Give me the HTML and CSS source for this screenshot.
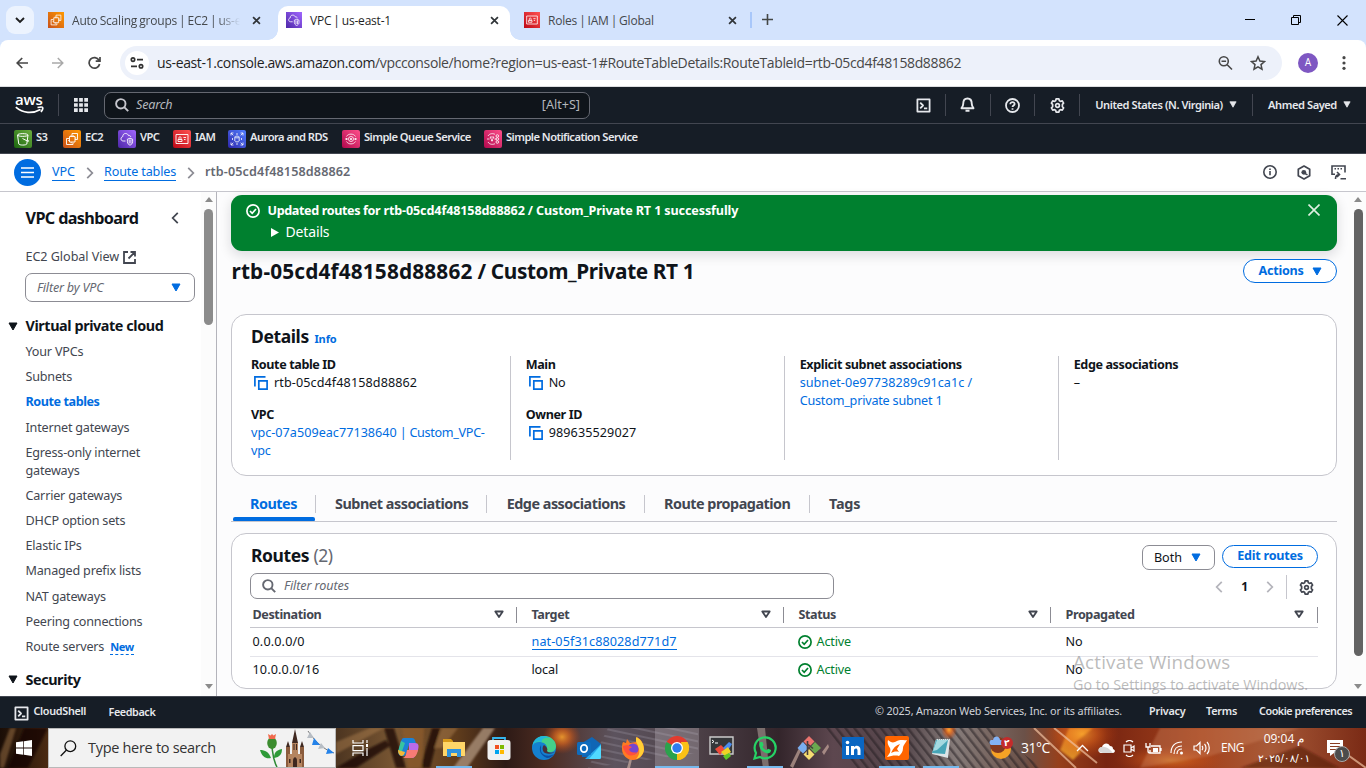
FILE: index.html
```html
<!DOCTYPE html>
<html lang="en">
<head>
<meta charset="utf-8">
<title>VPC | us-east-1</title>
<link rel="stylesheet" href="styles.css">
</head>
<body>
<svg class="defs" aria-hidden="true">
  <defs>
    <linearGradient id="g-orange" x1="0" y1="1" x2="1" y2="0"><stop offset="0" stop-color="#c8511b"/><stop offset="1" stop-color="#ff9900"/></linearGradient>
    <linearGradient id="g-purple" x1="0" y1="1" x2="1" y2="0"><stop offset="0" stop-color="#4d27a8"/><stop offset="1" stop-color="#a166ff"/></linearGradient>
    <linearGradient id="g-red" x1="0" y1="1" x2="1" y2="0"><stop offset="0" stop-color="#bd0816"/><stop offset="1" stop-color="#ff5252"/></linearGradient>
    <linearGradient id="g-green" x1="0" y1="1" x2="1" y2="0"><stop offset="0" stop-color="#1b660f"/><stop offset="1" stop-color="#6cae3e"/></linearGradient>
    <linearGradient id="g-blue" x1="0" y1="1" x2="1" y2="0"><stop offset="0" stop-color="#2e27ad"/><stop offset="1" stop-color="#527fff"/></linearGradient>
    <linearGradient id="g-pink" x1="0" y1="1" x2="1" y2="0"><stop offset="0" stop-color="#b0084d"/><stop offset="1" stop-color="#ff4f8b"/></linearGradient>
    <symbol id="i-ec2" viewBox="0 0 18 18"><path fill="url(#g-orange)" d="M0 0h18v18H0z"/><path fill="none" stroke="#fff" stroke-width=".9" d="M6 8.500H3.500v6H10V12.500M6.500 6.500h5.500v5.500H6.500zM9 6.500V3.500h5.500v6H12M8 5.200v1.300M10.200 5.200v1.300M5.200 10.500h1.300M12 8h1.300M8.200 12v1.300"/></symbol>
    <symbol id="i-vpc" viewBox="0 0 18 18"><path fill="url(#g-purple)" d="M0 0h18v18H0z"/><path fill="none" stroke="#fff" stroke-width=".9" d="M7.500 11H5.200C3.800 11 3 10 3 8.800c0-1.200.8-2 1.800-2.200C4.700 4.500 6 3.500 7.600 3.500c1.500 0 2.500.9 2.900 2.100 1.200-.3 2.100.3 2.400 1.400M12 8.200l2.600 1v2.600c0 1.600-1 2.700-2.600 3.400-1.600-.7-2.600-1.800-2.600-3.400V9.200zM11.200 9.500v4M12.900 9.500v4"/></symbol>
    <symbol id="i-iam" viewBox="0 0 18 18"><path fill="url(#g-red)" d="M0 0h18v18H0z"/><path fill="none" stroke="#fff" stroke-width=".9" d="M3 4.500h12v9H3zM5 11.500h4v-2H5zM6 9.500V7.500c0-1 2-1 2 0v2M10.500 7.500h2.500M11 9.500h1.500"/></symbol>
    <symbol id="i-s3" viewBox="0 0 18 18"><path fill="url(#g-green)" d="M0 0h18v18H0z"/><path fill="none" stroke="#fff" d="M3.500 5c0-1.800 10.500-1.800 10.500 0s-10.500 1.800-10.500 0zM3.500 5l1.300 9c.5 1.400 7.400 1.400 8 0L14 5M8.500 8.500l5 2.600c1.500.7 1.700-.3 0-1.300"/></symbol>
    <symbol id="i-rds" viewBox="0 0 18 18"><path fill="url(#g-blue)" d="M0 0h18v18H0z"/><path fill="none" stroke="#fff" stroke-width=".8" d="M3 5.500V3h2.500M3 3l2.300 2.300M12.500 3H15v2.500M15 3l-2.300 2.300M3 12.500V15h2.500M3 15l2.300-2.300M12.500 15H15v-2.500M15 15l-2.300-2.300M6.800 7c0-1.200 4.400-1.200 4.400 0v4c0 1.200-4.400 1.200-4.400 0zM6.800 7c0 1.200 4.400 1.200 4.400 0M4.500 8v2M13.500 8v2M8 14h2M8 4h2"/></symbol>
    <symbol id="i-sqs" viewBox="0 0 18 18"><path fill="url(#g-pink)" d="M0 0h18v18H0z"/><g fill="none" stroke="#fff" stroke-width=".8"><path d="M4.500 6.500C6.300 3.300 11.700 3.300 13.500 6.500M4.500 11.500c1.800 3.200 7.200 3.200 9 0M3 9h3M12 9h3M4.500 8v2M13.500 8v2"/><circle cx="9" cy="9" r="2.500"/><path d="M8 8l2 2M10 8l-2 2"/></g></symbol>
    <symbol id="i-sns" viewBox="0 0 18 18"><path fill="url(#g-pink)" d="M0 0h18v18H0z"/><g fill="none" stroke="#fff" stroke-width=".8"><path d="M4 6C5.500 3.300 9 3.300 11 4.300M4 12c1.500 2.700 5 2.700 7 1.700M3 9h2.500M6 7h4L8.500 9.500V11h-1V9.500zM10.500 9h2"/><circle cx="13.300" cy="6" r="1.300"/><circle cx="13.300" cy="9" r="1.300"/><circle cx="13.300" cy="12" r="1.300"/></g></symbol>
    <symbol id="i-x" viewBox="0 0 10 10"><path fill="none" stroke="currentColor" stroke-width="1.900" d="M1.200 1.200l7.600 7.600M8.800 1.200l-7.600 7.600"/></symbol>
    <symbol id="i-shell" viewBox="0 0 16 16"><path fill="none" stroke="currentColor" stroke-width="1.900" stroke-linejoin="round" d="M1.500 1.500h13v13h-13zM4.500 5l3 3-3 3M8.500 11h3.500"/></symbol>
    <symbol id="i-gear" viewBox="0 0 16 16"><path fill="none" stroke="currentColor" stroke-width="1.800" stroke-linejoin="round" d="M6 2.900L6.500 1h3l.5 1.900 1.200.7 1.900-.5 1.400 2.400-1.300 1.300v2.400l1.300 1.300-1.400 2.400-1.900-.5-1.200.7L9.500 15h-3L6 13.100l-1.200-.7-1.900.5-1.400-2.400 1.300-1.300V6.800L1.500 5.500l1.400-2.400 1.900.5z"/><circle cx="8" cy="8" r="2" fill="none" stroke="currentColor" stroke-width="1.800"/></symbol>
    <symbol id="i-down" viewBox="0 0 10 9"><path fill="currentColor" stroke="currentColor" stroke-linejoin="round" d="M1 1h8L5 8z"/></symbol>
    <symbol id="i-sort" viewBox="0 0 10 9"><path fill="none" stroke="currentColor" stroke-width="1.800" stroke-linejoin="round" d="M1.300 1.500h7.400L5 7z"/></symbol>
    <symbol id="i-right" viewBox="0 0 8 13"><path fill="none" stroke="currentColor" stroke-width="1.900" d="M1 1l5.500 5.500L1 12"/></symbol>
    <symbol id="i-left" viewBox="0 0 8 13"><path fill="none" stroke="currentColor" stroke-width="1.900" d="M7 1L1.500 6.500 7 12"/></symbol>
    <symbol id="i-search" viewBox="0 0 14 14"><g fill="none" stroke="currentColor" stroke-width="1.900"><circle cx="5.800" cy="5.800" r="4.700"/><path d="M9.200 9.200l4 4"/></g></symbol>
    <symbol id="i-copy" viewBox="0 0 14 14"><path fill="none" stroke="currentColor" stroke-width="1.700" d="M4.800 4.800h8.300v8.300H4.800zM.9 10.500V.9h10.600"/></symbol>
    <symbol id="i-ok" viewBox="0 0 14 14"><g fill="none" stroke="currentColor" stroke-width="1.700"><circle cx="7" cy="7" r="6.100"/><path d="M4 7l2.200 2.300L10 5"/></g></symbol>
  </defs>
</svg>

<div class="tabstrip">
  <div class="tab-search"><svg width="10" height="7" viewBox="0 0 10 7"><path fill="none" stroke="#1f1f1f" stroke-width="1.900" d="M1 1l4 4 4-4"/></svg></div>
  <div class="tab tab-first"><svg width="16" height="16"><use href="#i-ec2"/></svg><span class="tab-title faded">Auto Scaling groups | EC2 | us-e</span><svg class="tab-x" width="9" height="9"><use href="#i-x"/></svg></div>
  <div class="tab tab-active"><svg width="16" height="16"><use href="#i-vpc"/></svg><span class="tab-title">VPC | us-east-1</span><svg class="tab-x" width="9" height="9"><use href="#i-x"/></svg></div>
  <div class="tab tab-last"><svg width="16" height="16"><use href="#i-iam"/></svg><span class="tab-title">Roles | IAM | Global</span><svg class="tab-x" width="9" height="9"><use href="#i-x"/></svg></div>
  <div class="tab-new"><svg width="11" height="11" viewBox="0 0 11 11"><path stroke="#444746" stroke-width="1.600" d="M5.500 0v11M0 5.500h11"/></svg></div>
  <div class="win-controls">
    <svg width="10" height="10" viewBox="0 0 10 10"><path stroke="#000" d="M0 4.500h10"/></svg>
    <svg width="10" height="10" viewBox="0 0 10 10"><path fill="none" stroke="#000" d="M.5 2.500h7v7h-7zM2.500 2.500v-2h7v7h-2"/></svg>
    <svg width="11" height="11" viewBox="0 0 11 11"><path stroke="#000" stroke-width="1.100" d="M.5.500l10 10M10.500.500l-10 10"/></svg>
  </div>
</div>

<div class="toolbar">
  <svg class="nav-btn" width="12" height="12" viewBox="0 0 12 12"><path fill="none" stroke="#474747" stroke-width="1.700" d="M12 6H1.200M6.200 1L1.200 6l5 5"/></svg>
  <svg class="nav-btn" width="12" height="12" viewBox="0 0 12 12"><path fill="none" stroke="#a9a9a9" stroke-width="1.500" d="M0 6h10.800M5.800 1l5 5-5 5"/></svg>
  <svg class="nav-btn" width="14" height="14" viewBox="0 0 14 14"><path fill="none" stroke="#474747" stroke-width="1.700" d="M11 4.200A5.300 5.300 0 1 0 11.600 8M12 1v4.200H7.700"/></svg>
  <div class="omnibox">
    <div class="site-info"><svg width="14" height="12" viewBox="0 0 14 12"><g fill="none" stroke="#303030" stroke-width="1.700"><circle cx="3" cy="2.600" r="1.700"/><path d="M7 2.600h6M1 9.300h6"/><circle cx="11" cy="9.300" r="1.700"/></g></svg></div>
    <span class="url"><b>us-east-1.console.aws.amazon.com</b>/vpcconsole/home?region=us-east-1#RouteTableDetails:RouteTableId=rtb-05cd4f48158d88862</span>
    <svg class="zoom-icon" width="15" height="15" viewBox="0 0 15 15"><g fill="none" stroke="#474747" stroke-width="1.600"><circle cx="5.800" cy="5.300" r="4.500"/><path d="M3.500 5.300h4.600M9.200 8.700l4.800 4.800"/></g></svg>
    <svg class="star" width="16" height="16" viewBox="0 0 16 16"><path fill="none" stroke="#474747" stroke-width="1.500" d="M8 1.800l1.900 4.300 4.600.4-3.500 3.100 1 4.600L8 11.800l-4 2.400 1-4.600L1.500 6.500l4.600-.4z"/></svg>
  </div>
  <div class="avatar">A</div>
  <svg class="kebab" width="4" height="14" viewBox="0 0 4 14"><g fill="#474747"><circle cx="2" cy="1.700" r="1.600"/><circle cx="2" cy="7" r="1.600"/><circle cx="2" cy="12.300" r="1.600"/></g></svg>
</div>

<header class="aws-bar">
  <div class="logo"><span>aws</span><svg width="29" height="9" viewBox="0 0 29 9"><path fill="none" stroke="#fff" stroke-width="1.700" d="M.8 1.200C8 7.500 17.500 8 25.500 3.500M22.500 1.500c3-.7 5-.5 5.200.1.300.8-.4 2.800-1.700 4.400"/></svg></div>
  <div class="apps"><svg width="14" height="14" viewBox="0 0 15 15"><path fill="#e6e8ec" d="M0 0h4v4H0zM5.500 0h4v4h-4zM11 0h4v4h-4zM0 5.500h4v4H0zM5.500 5.500h4v4h-4zM11 5.500h4v4h-4zM0 11h4v4H0zM5.500 11h4v4h-4zM11 11h4v4h-4z"/></svg></div>
  <div class="aws-search"><svg width="14" height="14"><use href="#i-search"/></svg><i>Search</i><span>[Alt+S]</span></div>
  <div class="aws-tools">
    <div class="tool"><svg width="15" height="15"><use href="#i-shell"/></svg></div>
    <div class="tool"><svg width="15" height="16" viewBox="0 0 15 16"><path fill="none" stroke="currentColor" stroke-width="1.900" stroke-linejoin="round" d="M3.200 7C3.200 3.500 4.500 1.500 7.500 1.500S11.800 3.500 11.800 7c0 2 .7 3 1.700 4.200h-12C2.500 10 3.200 9 3.200 7zM5.500 13.700h4"/></svg></div>
    <div class="tool"><svg width="15" height="15" viewBox="0 0 15 15"><g fill="none" stroke="currentColor" stroke-width="1.800"><circle cx="7.500" cy="7.500" r="6.500"/><path d="M5.300 6.200c0-2.800 4.500-2.600 4.300-.1-.1 1.500-2.100 1.400-2.100 3M7.500 10.300v1.500"/></g></svg></div>
    <div class="tool"><svg width="15" height="15"><use href="#i-gear"/></svg></div>
    <div class="tool region"><span>United States (N. Virginia)</span><svg width="8" height="7"><use href="#i-down"/></svg></div>
    <div class="tool user"><span>Ahmed Sayed</span><svg width="8" height="7"><use href="#i-down"/></svg></div>
  </div>
</header>

<nav class="favorites">
  <a class="w49"><svg><use href="#i-s3"/></svg><span>S3</span></a>
  <a class="w55"><svg><use href="#i-ec2"/></svg><span>EC2</span></a>
  <a class="w55"><svg><use href="#i-vpc"/></svg><span>VPC</span></a>
  <a class="w55"><svg><use href="#i-iam"/></svg><span>IAM</span></a>
  <a class="w114"><svg><use href="#i-rds"/></svg><span>Aurora and RDS</span></a>
  <a class="w142"><svg><use href="#i-sqs"/></svg><span>Simple Queue Service</span></a>
  <a><svg><use href="#i-sns"/></svg><span>Simple Notification Service</span></a>
</nav>

<div class="crumbs">
  <div class="menu-btn"><svg width="13" height="11" viewBox="0 0 13 11"><path stroke="#fff" stroke-width="1.500" d="M0 1h13M0 5.500h13M0 10h13"/></svg></div>
  <a class="c1">VPC</a><svg class="sep" width="8" height="12"><use href="#i-right"/></svg>
  <a class="c2">Route tables</a><svg class="sep" width="8" height="12"><use href="#i-right"/></svg>
  <b>rtb-05cd4f48158d88862</b>
  <div class="crumb-tools">
    <svg width="14" height="14" viewBox="0 0 14 14"><g fill="none" stroke="currentColor" stroke-width="1.600"><circle cx="7" cy="7" r="6.200"/><path d="M7 6v4.300M7 3.500v1.600"/></g></svg>
    <svg width="14" height="15" viewBox="0 0 14 15"><path fill="none" stroke="currentColor" stroke-width="1.700" stroke-linejoin="round" d="M7 1l5.700 3.200v6.600L7 14l-5.700-3.200V4.200z"/><circle cx="6.800" cy="7.300" r="2.400" fill="currentColor"/><path stroke="currentColor" stroke-width="1.500" d="M7 8l3.500 1.800"/></svg>
    <svg width="15" height="15" viewBox="0 0 15 15"><path fill="none" stroke="currentColor" stroke-width="1.600" d="M4 9.200H1V1h13v6.500M3.500 3.800h1.500M6.500 3.800H8M9.500 3.800H11M4.500 14c0-3 1-4.300 3.500-4.500M6 7l2.500 2.500L6 12M9.500 13.700H15"/></svg>
  </div>
</div>

<div class="workspace">
  <aside class="sidebar">
    <div class="side-head"><h2>VPC dashboard</h2><svg width="8" height="12"><use href="#i-left"/></svg></div>
    <a class="global">EC2 Global View <svg width="13" height="13" viewBox="0 0 13 13"><path fill="none" stroke="currentColor" stroke-width="1.800" d="M5 1H1v11h11V8M7.500 1H12v4.500M12 1L5.500 7.500"/></svg></a>
    <div class="select"><i>Filter by VPC</i><svg width="10" height="9"><use href="#i-down"/></svg></div>
    <h3><svg width="10" height="9"><use href="#i-down"/></svg>Virtual private cloud</h3>
    <ul>
      <li>Your VPCs</li><li>Subnets</li><li class="on">Route tables</li><li>Internet gateways</li><li>Egress-only internet<br>gateways</li><li>Carrier gateways</li><li>DHCP option sets</li><li>Elastic IPs</li><li>Managed prefix lists</li><li>NAT gateways</li><li>Peering connections</li><li>Route servers <span class="new">New</span></li>
    </ul>
    <h3 class="h3-2"><svg width="10" height="9"><use href="#i-down"/></svg>Security</h3>
  </aside>
  <div class="scrollbar"><i class="up"></i><div class="thumb short"></div><i class="dn"></i></div>

  <main class="main">
    <div class="flash">
      <svg width="14" height="14"><use href="#i-ok"/></svg>
      <div class="flash-body"><b><span>Updated routes for</span> rtb-05cd4f48158d88862 / Custom_Private RT 1 successfully</b><p><svg width="8" height="9" viewBox="0 0 8 9"><path fill="#fff" d="M0 0l8 4.500L0 9z"/></svg>Details</p></div>
      <svg class="flash-x" width="12" height="12" viewBox="0 0 12 12"><path stroke="#dff0e2" stroke-width="1.600" d="M.5.500l11 11M11.500.500l-11 11"/></svg>
    </div>
    <div class="title-row"><h1><span>rtb-05cd4f48158d88862</span> / Custom_Private RT 1</h1><div class="pill actions">Actions<svg width="10" height="9"><use href="#i-down"/></svg></div></div>

    <section class="card details">
      <h2>Details <small>Info</small></h2>
      <div class="cols">
        <dl><dt>Route table ID</dt><dd class="id"><svg class="copy"><use href="#i-copy"/></svg>rtb-05cd4f48158d88862</dd><dt>VPC</dt><dd class="lnk"><span class="id">vpc-07a509eac77138640</span><span class="tight"> | Custom_VPC-</span><br>vpc</dd></dl>
        <dl><dt>Main</dt><dd><svg class="copy"><use href="#i-copy"/></svg>No</dd><dt>Owner ID</dt><dd class="id"><svg class="copy"><use href="#i-copy"/></svg>989635529027</dd></dl>
        <dl><dt>Explicit subnet associations</dt><dd class="lnk"><span class="id">subnet-0e97738289c91ca1c /</span><br>Custom_private subnet 1</dd></dl>
        <dl><dt>Edge associations</dt><dd>–</dd></dl>
      </div>
    </section>

    <div class="tabs">
      <span class="t1 sel">Routes</span><span class="t2">Subnet associations</span><span class="t3">Edge associations</span><span class="t4">Route propagation</span><span class="t5">Tags</span>
    </div>

    <section class="card routes">
      <div class="routes-head"><h2>Routes <em>(2)</em></h2><div class="both">Both<svg width="10" height="9"><use href="#i-down"/></svg></div><div class="pill edit">Edit routes</div></div>
      <div class="filter-row">
        <div class="filter"><svg width="14" height="14"><use href="#i-search"/></svg><i>Filter routes</i></div>
        <div class="pager"><svg width="8" height="12"><use href="#i-left"/></svg><b>1</b><svg width="8" height="12"><use href="#i-right"/></svg></div>
        <div class="prefs"><svg width="15" height="15"><use href="#i-gear"/></svg></div>
      </div>
      <div class="row thead"><div>Destination<svg><use href="#i-sort"/></svg></div><div>Target<svg><use href="#i-sort"/></svg></div><div>Status<svg><use href="#i-sort"/></svg></div><div>Propagated<svg><use href="#i-sort"/></svg></div></div>
      <div class="row line"><div class="id">0.0.0.0/0</div><div><a class="nat id">nat-05f31c88028d771d7</a></div><div class="ok"><svg><use href="#i-ok"/></svg>Active</div><div>No</div></div>
      <div class="row"><div class="id">10.0.0.0/16</div><div>local</div><div class="ok"><svg><use href="#i-ok"/></svg>Active</div><div>No</div></div>
    </section>
  </main>
  <div class="scrollbar dark"><i class="up"></i><div class="thumb long"></div><i class="dn"></i></div>
</div>

<footer class="aws-foot">
  <svg width="15" height="15"><use href="#i-shell"/></svg><span class="f1">CloudShell</span><span class="f2">Feedback</span>
  <span class="copyr">© 2025, Amazon Web Services, Inc. or its affiliates.</span><span class="f3">Privacy</span><span class="f4">Terms</span><span class="f5">Cookie preferences</span>
</footer>

<div class="taskbar">
  <svg class="wall" width="1366" height="40" viewBox="0 0 1366 40" preserveAspectRatio="none">
    <defs>
      <linearGradient id="wall" x1="0" x2="1" y1="0" y2="0">
        <stop offset="0" stop-color="#1a0d06"/><stop offset=".035" stop-color="#4a2a12"/><stop offset=".245" stop-color="#4b3420"/><stop offset=".29" stop-color="#7a5733"/><stop offset=".335" stop-color="#5f3c1c"/><stop offset=".37" stop-color="#2d1a16"/><stop offset=".4" stop-color="#4d2c22"/><stop offset=".45" stop-color="#5c535e"/><stop offset=".5" stop-color="#51454c"/><stop offset=".57" stop-color="#33252b"/><stop offset=".61" stop-color="#5d474f"/><stop offset=".66" stop-color="#54454a"/><stop offset=".7" stop-color="#857b79"/><stop offset=".75" stop-color="#6b5148"/><stop offset=".775" stop-color="#96401c"/><stop offset=".81" stop-color="#782511"/><stop offset=".88" stop-color="#a3421c"/><stop offset=".93" stop-color="#a85a38"/><stop offset="1" stop-color="#7a2a15"/>
      </linearGradient>
      <radialGradient id="glow"><stop offset="0" stop-color="#ffa52d"/><stop offset=".4" stop-color="#e96b1c" stop-opacity=".75"/><stop offset="1" stop-color="#c04010" stop-opacity="0"/></radialGradient>
      <pattern id="stripes" width="7" height="7" patternUnits="userSpaceOnUse" patternTransform="rotate(-38)"><path fill="#211b20" fill-opacity=".5" d="M0 0h2.500v7H0z"/></pattern>
      <pattern id="steps" width="7" height="7" patternUnits="userSpaceOnUse" patternTransform="rotate(12)"><path fill="#8b8491" fill-opacity=".4" d="M0 0h7v2H0z"/></pattern>
      <filter id="soft" x="-5%" y="-20%" width="110%" height="140%"><feGaussianBlur stdDeviation="1.200"/></filter>
    </defs>
    <path fill="url(#wall)" d="M0 0h1366v40H0z"/>
    <g filter="url(#soft)">
      <path fill="#0e0603" fill-opacity=".7" d="M24 0l24 0-20 40H8zM336 40l30-18 20-10 4 6-34 22zM384 0h10l12 40h-10zM432 0h8l-10 40h-10z"/>
      <path fill="#b08050" fill-opacity=".45" d="M10 0h6L4 40H0V26zM336 14l34-14h14l-48 26zM442 0h16l-16 20h-8z"/>
      <path fill="#a58a73" fill-opacity=".85" d="M483 0h12l-28 40h-14z"/>
      <path fill="#8b5a2a" fill-opacity=".8" d="M402 0h22l-2 40h-14z"/>
    </g>
    <ellipse cx="562" cy="9" rx="19" ry="17" fill="url(#glow)" opacity=".85"/>
    <path fill="url(#steps)" d="M608 0h90v25l-110 15z"/>
    <path fill="#988c86" fill-opacity=".7" d="M757 0h8l4 40h-6z"/>
    <path fill="url(#stripes)" d="M825 0h165l52 40H855z"/>
    <path fill="#e8c4b4" fill-opacity=".55" d="M790 38l12-24 2 2-11 24zM822 24l6-8 1 3-5 8zM627 40l4-14 2 1-3 13z"/>
    <ellipse cx="949" cy="2" rx="8" ry="10" fill="url(#glow)"/>
    <g filter="url(#soft)"><path fill="#ffb52c" fill-opacity=".72" d="M1069 0h24l-17 14 5 10-8 8-13-10z"/></g>
    <ellipse cx="1082" cy="6" rx="37" ry="26" fill="url(#glow)" opacity=".7"/>
    <ellipse cx="1170" cy="32" rx="55" ry="15" fill="url(#glow)" opacity=".5"/>
    <path stroke="#efc0a0" stroke-opacity=".7" stroke-width="2" d="M1034 0l42 40M1054 0l43 35M1345 25l21 15"/>
    <g filter="url(#soft)"><path fill="#d28a62" fill-opacity=".35" d="M1160 0h140l-90 28-70 12z"/><path fill="#4b120b" fill-opacity=".5" d="M1240 40l60-22 40 22z"/></g>
  </svg>
  <div class="start"><svg width="16" height="16" viewBox="0 0 16 16"><path fill="#fff" d="M0 2.300l7.300-1v6.300H0zM8 1.200L16 0v7.600H8zM0 8.400h7.300v6.300L0 13.700zM8 8.400h8V16l-8-1.200z"/></svg></div>
  <div class="tb-search">
    <svg width="17" height="17" viewBox="0 0 17 17"><g fill="none" stroke="#111" stroke-width="1.300"><circle cx="10.300" cy="6.200" r="5.400"/><path d="M6.500 10L.7 16"/></g></svg>
    <span>Type here to search</span>
    <svg class="art" width="75" height="38" viewBox="0 0 75 38">
      <path fill="none" stroke="#2e8a35" stroke-width="1.500" d="M12 18c1 8 1 13 5 20"/>
      <path fill="#2e9a38" d="M0 21c5 0 9 2 11 8C6 30 2 28 0 21zM22 20c-6 1-8 4-8 9 6-1 8-4 8-9z"/>
      <ellipse cx="12" cy="14" rx="4.800" ry="6" fill="#3c8c2f"/><path fill="#f06a4d" d="M8 5l2.500 1.500L12 5l1.500 1.500L16 5l-1 5H9z"/>
      <path fill="#8b5c3d" d="M26 18h4v20h-4zM40 18h4v20h-4z"/><path fill="#b58560" d="M32 14h6v24h-6zM28 25h14v13H28z"/><path fill="#3f2820" d="M33.500 15h1v6h-1zM36 15h1v6h-1zM35 0l3 14h-6zM28 12l2 6h-4zM42 12l2 6h-4zM33 32c0-5 4-5 4 0v6h-4zM29 30h1.500v4H29zM39.500 30H41v4h-1.500z"/>
      <path fill="none" stroke="#777" d="M48 2c8 12 17 19 26 22"/><path fill="#b7bdc4" d="M47 9l3-6 4 6zM58 20l3-6 4 5z"/><path fill="#2583e9" d="M52 16l2-7 6 7zM66 25l2-6 6 5z"/>
    </svg>
  </div>
  <div class="app w50"><svg width="17" height="16" viewBox="0 0 17 16"><path fill="none" stroke="#fff" stroke-width="1.200" d="M1 0v3h10V0M1 16v-3h10v3M1 5.600h10v5H1zM15 0v3M15 8v8"/><path fill="#fff" d="M14 4h2v3h-2z"/></svg></div>
  <div class="app w47"><svg width="24" height="22" viewBox="0 0 24 22"><path fill="#1b82d8" d="M7 1h8c3 0 3 3 4 5h-5c-2 0-2 2-3 5l-2 6c-1 2-2 2-4 2C1 19 1 16 2 12l2-8c1-2 1-3 3-3z"/><path fill="#38c4a0" d="M4 4l4 2-4 11C1 17 1 14 2 11z"/><path fill="#f4b936" d="M1 13l7 2c-1 3-2 4-4 4-2-1-3-3-3-6z"/><path fill="#b96bea" d="M12 6h6c4 0 4 3 3 7l-3 6c-1 2-2 2-4 2H8c3-1 3-4 4-7z"/><path fill="#f77b75" d="M10 13h11c-1 5-3 8-7 8H6c3-1 3-4 4-8z"/></svg></div>
  <div class="app run"><svg width="22" height="20" viewBox="0 0 22 20"><path fill="#d99b19" d="M0 1h8l2 2v4H0z"/><path fill="#ffd668" d="M0 4h22v14H0z"/><path fill="#2f93dd" d="M4 19v-8h14v8h-4v-4H8v4z"/></svg></div>
  <div class="app w45"><svg width="24" height="24" viewBox="0 0 24 24"><path fill="none" stroke="#34b5ef" stroke-width="1.800" d="M6 6V2h12v4"/><rect y="4" x=".5" width="23" height="20" rx="3" fill="#f1f1f1"/><path fill="#f25022" d="M8 9h4v4H8z"/><path fill="#7fba00" d="M13 9h4v4h-4z"/><path fill="#00a4ef" d="M8 14h4v4H8z"/><path fill="#ffb900" d="M13 14h4v4h-4z"/></svg></div>
  <div class="app w45"><svg width="24" height="24" viewBox="0 0 24 24"><circle cx="12" cy="12" r="12" fill="#1480d0"/><path fill="#45d08a" d="M12 0c7 0 12 5 12 10 0 4-3 7-8 6-3-1-1-2-1-4 0-4-4-6-8-6-3 0-5 1-6 2C3 3 7 0 12 0z"/><path fill="#20b7db" d="M12 0C6 0 1 4 .5 10 3 5 7 5 10 6c-1-3 3-5 8-4-2-1-4-2-6-2z"/><path fill="#0b4fa4" d="M9 9c-3 5 0 11 6 13 3 0 6-2 7-4-4 3-12 2-13-3-.4-2 .3-4 0-6z"/><path fill="#4a3038" d="M12 9c-2 2-2 6 1 8 3 1 7 1 10-1-3 1-7 1-8-1 1-2 0-4-3-6z"/></svg></div>
  <div class="app w45"><svg width="24" height="24" viewBox="0 0 24 24"><path fill="#1066b5" d="M5 7l10-6 9 7v13H5z"/><path fill="#28a8ea" d="M24 8v13c0 2-1 2-3 2H8L20 12z"/><path fill="#50d9ff" d="M24 9v12c0 2-1 2-3 2h-9z"/><rect y="6" width="14" height="13" rx="1.500" fill="#0f6cbd"/><ellipse cx="7" cy="12.500" rx="3.200" ry="3.700" fill="none" stroke="#fff" stroke-width="1.800"/></svg></div>
  <div class="app"><svg width="24" height="24" viewBox="0 0 24 24"><path fill="#ff7a22" d="M2 6l3 1 1-4 3 4 6-1 1-5c5 3 7 8 7 12 0 6-5 11-11 11S1 19 1 13c0-3 0-5 1-7z"/><path fill="#ffcf35" d="M15 1c6 3 8 8 8 13-1 5-4 8-8 9 4-4 4-9 2-12 0-3-2-4-2-6z"/><circle cx="12" cy="13" r="5.500" fill="#7546cf"/><path fill="#ff4f3d" d="M2 10l4-1 5 2-3 2c1 4 5 4 8 3-2 4-8 5-11 1C3 15 2 12 2 10z"/></svg></div>
  <div class="app run active"><svg width="24" height="24" viewBox="0 0 24 24"><path fill="#e33b2e" d="M12 12L1.600 6a12 12 0 0 1 20.800 0z"/><path fill="#fbc116" d="M12 12L22.400 6A12 12 0 0 1 12 24z"/><path fill="#2ba24c" d="M12 12v12A12 12 0 0 1 1.600 6z"/><path fill="#fbc116" d="M12 24l6-9-2-9h6.400c4 7-1 18-10.400 18z"/><circle cx="12" cy="12" r="6" fill="#fff"/><circle cx="12" cy="12" r="4.700" fill="#2d7cf0"/></svg></div>
  <div class="app"><svg width="25" height="24" viewBox="0 0 25 24"><path fill="#35373a" stroke="#ccc" stroke-width="1.400" d="M1 1h23v17H1z"/><path fill="none" stroke="#fff" d="M3 4l2 1.500L3 7M6 7h3"/><path fill="#ef4a3b" d="M6 13l6-4 4 4-5 6z"/><path fill="#4a8cf0" d="M14 12l6-6 3 2-5 8z"/><path fill="#efd326" d="M12 16l7-5 3 5-6 4z"/><path fill="#5fc927" d="M14 20l6-3 2 3-5 4z"/></svg></div>
  <div class="app run narrow"><svg width="24" height="24" viewBox="0 0 24 24"><path fill="none" stroke="#26d265" stroke-width="2.200" d="M1.500 22.500L3 17A10.500 10.500 0 1 1 7 21z"/><path fill="#26d265" d="M7.500 6h2l1.200 3-1.200 1.700c1 2 2 2.800 4 3.600l1.600-1.600 3 1.400c0 2-1.300 3.300-3.300 3.300C10 17 6 12 6.300 8.500c0-1 .5-2 1.200-2.500z"/></svg></div>
  <div class="app"><svg width="24" height="24" viewBox="0 0 24 24"><path fill="#ea736e" d="M12 0l5.500 5.500L12 11 6.500 5.500z"/><path fill="#7aaef0" d="M6 6l5.500 6L6 17.500.5 12z"/><path fill="#6aa84f" d="M18 6l6 6-6 5.500-5.500-5.500z"/><path fill="#f5dc72" d="M12 13l5.500 5.500L12 24l-5.500-5.500z"/><path fill="none" stroke="#463d3d" stroke-width="1.600" d="M10.500 5v14M10.500 8l5.500 4.500"/></svg></div>
  <div class="app"><svg width="22" height="22" viewBox="0 0 22 22"><path fill="#0a66c2" d="M0 0h22v22H0z"/><path fill="#fff" d="M4 9h3v9H4zM9 9h3v1.300c1.500-2.500 6.500-2 6.500 2.700v5h-3v-4.500c0-3-3.500-2.500-3.500 0V18H9z"/><circle cx="5.500" cy="5.500" r="1.800" fill="#fff"/></svg></div>
  <div class="app run narrow"><svg width="24" height="24" viewBox="0 0 24 24"><rect width="24" height="24" rx="2" fill="#ff6500"/><path fill="#fff" d="M3 4c3 3 6 3 9 1 4-2 7 0 10-1-1 3-4 5-4 8 0 4-2 6-4 8-4-1-8 0-12 1 3-4 4-6 3-9C3 9 2 7 3 4z"/><path fill="#ff6500" d="M6 17c2-5 5-8 9-9l-3 5 2 3c-3-1-6 0-8 1z"/></svg></div>
  <div class="app run narrow"><svg width="24" height="24" viewBox="0 0 24 24"><path fill="#dce3e6" d="M7 3h14l-2 19-16-4z"/><path fill="#47a5b7" d="M7 4h12l-3 14-13-1z"/><path fill="#a4d9e0" d="M8 4h11L8 14l-4 1z"/><path stroke="#53666b" stroke-dasharray="1 1" d="M7 3h14"/></svg></div>
  <div class="weather"><svg width="25" height="24" viewBox="0 0 25 24"><circle cx="12" cy="13" r="10" fill="#f6a325"/><circle cx="9" cy="9" r="8" fill="#843a20"/><path fill="#83b3f5" d="M2 9c-3-2-1-6 2-5 1-5 7-4 7 0 4 0 4 5 1 5z"/><circle cx="18" cy="7" r="6" fill="#c42b2b"/></svg><span class="badge">٢</span></div>
  <span class="temp">31°C</span>
  <div class="tray">
    <svg width="13" height="8" viewBox="0 0 13 8"><path fill="none" stroke="#fff" stroke-width="1.300" d="M1 7l5.500-5.500L12 7"/></svg>
    <svg width="17" height="12" viewBox="0 0 17 12"><path fill="#fff" d="M3 11c-4-1-3-6 1-6 1-4 6-5 8-1 2 0 3 1 3 3 3 1 2 4 0 4z"/><path fill="#bdbdbd" d="M4 5c3-1 7 1 11 6H5c-2-1-4-1-5-2 0-2 2-4 4-4z" opacity=".6"/></svg>
    <svg width="13" height="17" viewBox="0 0 13 17"><path fill="none" stroke="#fff" stroke-width="1.200" d="M1 5h7v7H1zM8 8l3-2v5L8 9M3 2c2-2 5-2 7 0M3 15c2 2 5 2 7 0"/></svg>
    <svg width="17" height="13" viewBox="0 0 17 13"><path fill="none" stroke="#fff" stroke-width="1.300" d="M6 4h9v7H5V8M16 6v3M1 1v4h4V1M3 5v4c0 2 2 2 2 2"/><path fill="#fff" d="M8 6h5v4H8z"/></svg>
    <svg width="14" height="14" viewBox="0 0 14 14"><path fill="none" stroke="#fff" stroke-width="1.200" d="M1 12C1 5 5 1 12 1M4 13c0-5 3-8 8-8M7 13c0-3 2-5 5-5"/><circle cx="11.500" cy="12" r="1.500" fill="#fff"/></svg>
    <svg width="18" height="14" viewBox="0 0 18 14"><path fill="none" stroke="#fff" stroke-width="1.200" d="M1 5h2.500L7 1.500v11L3.500 9H1zM9 5c1 1 1 3 0 4M11.500 3c2 2 2 6 0 8M14 1c3 3 3 9 0 12"/></svg>
  </div>
  <span class="lang">ENG</span>
  <div class="clock"><span class="hm" dir="ltr">09:04 م</span><span class="date" dir="ltr">٢٠٢٥/٠٨/٠١</span></div>
  <div class="notif"><svg width="16" height="16" viewBox="0 0 16 16"><path fill="#fff" d="M0 0h16v13H7l-4 3v-3H0z"/><path stroke="#8a3d22" d="M3 3.500h10M3 6.500h10M3 9.500h7"/></svg><span>١</span></div>
</div>

<div class="watermark"><p>Activate Windows</p><p>Go to Settings to activate Windows.</p></div>
</body>
</html>
```
FILE: styles.css
```css
* { box-sizing: border-box; }
body { margin: 0; width: 1366px; height: 768px; overflow: hidden; font: 12.6px/18px "Noto Sans", "Open Sans", sans-serif; color: #0f141a; background: #fff; position: relative; }
h1, h2, h3, p, ul, dl, dd { margin: 0; padding: 0; }
ul { list-style: none; }
svg { display: block; flex: none; }
.defs { position: absolute; width: 0; height: 0; }

/* browser chrome */
.tabstrip { height: 40px; background: #d3e3fd; display: flex; align-items: flex-start; font: 12px/16px "Open Sans", sans-serif; letter-spacing: -.2px; word-spacing: -.9px; color: #45494d; }
.tab-search { width: 28px; height: 28px; margin: 6px 0 0 6px; border-radius: 9px; background: #ecf3fe; display: grid; place-items: center; }
.tab { height: 34px; margin-top: 6px; display: flex; align-items: flex-start; padding-top: 6px; }
.tab-first { width: 244px; padding-left: 14px; }
.tab-active { width: 232px; padding-left: 8px; background: #fff; border-radius: 10px 10px 0 0; color: #1f1f1f; position: relative; z-index: 1; }
.tab-active::before, .tab-active::after { content: ""; position: absolute; bottom: 0; width: 10px; height: 10px; }
.tab-active::before { left: -10px; background: radial-gradient(circle at 0 0, transparent 9.5px, #fff 10px); }
.tab-active::after { right: -10px; background: radial-gradient(circle at 100% 0, transparent 9.5px, #fff 10px); }
.tab-last { width: 242px; padding-left: 14px; background: linear-gradient(#a8c7fa, #a8c7fa) right 0 top 6px / 2px 16px no-repeat; }
.tab-title { margin-left: 8px; width: 180px; white-space: nowrap; line-height: 17px; }
.faded { width: 168px; -webkit-mask-image: linear-gradient(90deg, #000 145px, transparent 168px); mask-image: linear-gradient(90deg, #000 145px, transparent 168px); }
.tab-x { margin: 4px 0 0 -.500px; color: #303438; }
.tab-first .tab-x { margin-left: 11.500px; }
.tab-new { margin: 14px 0 0 10px; }
.win-controls { margin-left: auto; display: flex; gap: 36px; padding: 15px 18px 0 0; }
.toolbar { height: 47px; background: #fff; border-bottom: 1px solid #dcdde0; display: flex; align-items: center; padding-left: 16px; border-radius: 8px 8px 0 0; box-shadow: 0 -8px 0 0 #d3e3fd; }
.toolbar .nav-btn { margin-right: 24px; }
.toolbar .nav-btn:nth-child(3) { margin-right: 19px; }
.omnibox { width: 1162px; height: 34px; border-radius: 17px; background: #edf1fa; display: flex; align-items: center; padding: 0 16px 0 5px; margin-left: -1px; }
.site-info { width: 24px; height: 24px; border-radius: 12px; background: #fff; display: grid; place-items: center; }
.url { margin-left: 8px; flex: 1; font: 14px/20px "Open Sans", sans-serif; color: #474747; letter-spacing: -.372px; white-space: nowrap; }
.url b { font-weight: 400; color: #1f1f1f; }
.star { margin-left: 17px; }
.avatar { width: 20px; height: 20px; margin-left: 16px; border-radius: 50%; background: #7e57c2; color: #fff; font: 10px/20px Roboto, sans-serif; text-align: center; }
.kebab { margin-left: 24px; }

/* console header */
.aws-bar { height: 37px; background: #161d26; border-bottom: 1px solid #424650; display: grid; grid-template-columns: 59px 45px 486px 1fr; align-items: center; color: #e6e8ec; }
.logo { height: 22px; margin-left: 15px; border-right: 1px solid #424650; color: #fff; font: 600 15px/11px "Open Sans", sans-serif; letter-spacing: -.2px; }
.logo span { display: block; height: 12px; line-height: 10px; }
.apps { padding-left: 15px; }
.aws-search { height: 27px; border: 1px solid #656871; border-radius: 7px; background: #0f141a; display: flex; align-items: center; padding: 0 8px 0 10px; color: #b4b7bd; }
.aws-search svg { color: #c6c6cd; }
.aws-search i { margin-left: 7px; flex: 1; letter-spacing: -.2px; }
.aws-search span { margin-right: 1px; }
.aws-tools { display: flex; justify-content: flex-end; height: 22px; font-size: 11.100px; font-weight: 600; letter-spacing: -.44px; }
.tool { width: 44.700px; border-right: 1px solid #424650; display: flex; align-items: center; justify-content: center; white-space: nowrap; }
.region { width: 173px; gap: 6px; padding-bottom: 1px; }
.user { width: 113px; gap: 6px; border: 0; padding: 0 0 1px; }
.favorites { height: 30px; background: #161d26; border-bottom: 1px solid #424650; display: flex; padding: 6px 0 0 14px; color: #e6e8ec; font-size: 11.200px; font-weight: 600; line-height: 14px; letter-spacing: -.55px; }
.favorites a { display: flex; gap: 4px; white-space: nowrap; }
.favorites svg { width: 18px; height: 18px; border-radius: 2px; }
.w49 { width: 49px; } .w55 { width: 55px; } .w114 { width: 114px; } .w142 { width: 142px; }

/* breadcrumb strip */
.crumbs { height: 38px; border-bottom: 1px solid #c6c6cd; display: flex; align-items: center; padding-left: 14px; letter-spacing: -.15px; }
.menu-btn { width: 27px; height: 27px; border-radius: 50%; background: #006ce0; display: grid; place-items: center; margin-right: 11px; }
.crumbs a { color: #006ce0; border-bottom: 1px solid #006ce0; line-height: 16px; white-space: nowrap; }
.crumbs b { color: #656871; font-weight: 600; letter-spacing: .12px; line-height: 16px; margin-bottom: 1px; }
.c1 { width: 23px; } .c2 { width: 72px; }
.sep { color: #8c8c94; margin: 0 10.500px; }
.crumb-tools { margin-left: auto; display: flex; gap: 20px; padding-right: 20px; color: #424650; }

/* workspace */
.workspace { height: 504px; display: flex; background: #fcfcfd; }
.sidebar { width: 201px; background: #fff; padding-left: 25.500px; color: #424650; overflow: hidden; letter-spacing: -.2px; }
.side-head { display: flex; align-items: center; height: 24px; margin-top: 14px; }
.side-head h2 { width: 145px; font-size: 16.200px; line-height: 22px; color: #0f141a; letter-spacing: -.63px; white-space: nowrap; }
.global { display: flex; gap: 4px; align-items: center; margin-top: 18px; height: 18px; letter-spacing: -.05px; }
.select { width: 170px; height: 29px; margin: 7px 0 0 -.500px; border: 1px solid #8c8c94; border-radius: 7px; display: flex; align-items: center; justify-content: space-between; padding: 0 13px 0 11px; color: #656871; }
.select svg, .both svg { color: #006ce0; }
.sidebar h3 { display: flex; align-items: center; font-size: 14.400px; line-height: 20px; color: #0f141a; margin: 14px 0 7px -17.500px; gap: 7.500px; letter-spacing: -.42px; white-space: nowrap; }
.sidebar li { margin-bottom: 7.180px; }
.sidebar li.on { color: #006ce0; font-weight: 700; letter-spacing: -.43px; }
.new { color: #006ce0; font-size: 11px; font-weight: 700; line-height: 15px; letter-spacing: -.4px; display: inline-block; border-bottom: 1px dashed #006ce0; margin-left: 3px; }
.sidebar .h3-2 { margin-top: 14px; }
.scrollbar { width: 16px; border-right: 1px solid #b4b4bb; background: #fcfcfc; display: flex; flex-direction: column; align-items: center; padding-bottom: 7px; }
.scrollbar i { width: 0; height: 0; border: 4.500px solid transparent; flex: none; }
.scrollbar .up { border-bottom: 5px solid #8b8b8b; border-top: 0; margin-top: 5px; }
.scrollbar .dn { border-top: 5px solid #8b8b8b; border-bottom: 0; margin-top: auto; }
.thumb { width: 9px; border-radius: 5px; background: #8b8b8b; margin-top: 7px; }
.short { height: 116px; }
.long { height: 447px; background: #636363; }
.scrollbar.dark { border: 0; width: 17px; padding-left: 1px; }
.main { flex: 1; padding: 3px 12px 0 14px; }
.flash { height: 56px; border-radius: 11px; background: #00802f; color: #fff; display: flex; padding: 7px 17px 0 15px; box-shadow: 0 4px 12px 1px rgba(0, 7, 22, .12); }
.flash > svg { margin-top: 2px; }
.flash-body { margin-left: 7.500px; flex: 1; }
.flash-body b { letter-spacing: -.13px; line-height: 18px; display: block; }
.flash-body b span { letter-spacing: -.38px; }
.flash-body p { display: flex; align-items: center; gap: 7px; padding-left: 3px; margin-top: 2px; font-size: 14px; letter-spacing: -.15px; line-height: 20px; }
.title-row { display: flex; justify-content: space-between; margin-top: 8px; height: 55px; }
h1 { font-size: 20.800px; line-height: 24px; letter-spacing: -.38px; white-space: nowrap; padding-left: .500px; }
h1 span { letter-spacing: .15px; }
.pill { border: 1.500px solid #006ce0; border-radius: 13px; color: #006ce0; font-weight: 700; background: #fff; display: flex; justify-content: center; align-items: center; white-space: nowrap; letter-spacing: -.25px; }
.actions { width: 94px; height: 24px; gap: 8px; }
.card { background: #fff; border: 1px solid #c6c6cd; border-radius: 15px; padding: 0 19px; }
.card h2 { font-size: 17.500px; line-height: 22px; letter-spacing: -.4px; }
.details { height: 162px; padding-top: 10px; }
.details small { font-size: 11px; color: #006ce0; margin-left: 1.500px; letter-spacing: -.1px; }
.cols { display: grid; grid-template: 104px / 260px 274px 274px 1fr; margin-top: 5.500px; letter-spacing: -.2px; }
.cols dl { padding-left: 14.700px; border-right: 1px solid #c6c6cd; height: 104px; }
.cols dl:first-child { padding-left: 0; }
.cols dl:last-child { border: 0; }
.cols dt { font-weight: 700; letter-spacing: -.4px; }
.cols dd { display: flex; margin-bottom: 14px; white-space: nowrap; }
.cols dd.lnk { display: block; color: #006ce0; }
.cols dd.id, .id { letter-spacing: .1px; }
.cols .lnk .id { letter-spacing: .03px; }
.tight { letter-spacing: -.3px; }
.copy { width: 14px; height: 14px; margin: 2px 6px 0 3px; color: #006ce0; }
.tabs { height: 38px; margin-top: 8px; border-bottom: 1px solid #c6c6cd; display: flex; align-items: flex-start; font-size: 14.400px; font-weight: 700; color: #424650; letter-spacing: -.5px; white-space: nowrap; }
.tabs span { margin-top: 11px; height: 18px; padding-left: 19px; border-right: 1px solid #c6c6cd; }
.tabs .sel { color: #006ce0; position: relative; }
.tabs .sel::after { content: ""; position: absolute; left: 2px; right: 0; top: 22px; height: 4px; background: #006ce0; border-radius: 2px 2px 1px 1px; }
.t1 { width: 85px; } .t2 { width: 171px; } .t3 { width: 158px; } .t4 { width: 165px; }
.tabs .t3 { padding-left: 19.700px; }
.tabs .t5 { border: 0; letter-spacing: -.2px; }
.routes { height: 156px; margin-top: 11px; padding: 0 18px; }
.routes-head { display: flex; height: 38px; }
.routes-head h2 { flex: 1; padding-top: 10px; padding-left: 1px; }
.routes-head em { font-style: normal; font-weight: 400; color: #656871; }
.both { width: 73px; height: 25px; margin: 11px 7px 0 0; border: 1px solid #8c8c94; border-radius: 7px; display: flex; align-items: center; justify-content: center; gap: 9px; padding-right: 2px; }
.edit { width: 96px; height: 23px; margin-top: 11px; padding-bottom: 1px; }
.filter-row { display: flex; align-items: center; height: 28px; }
.filter { width: 584px; height: 26px; border: 1px solid #8c8c94; border-radius: 7px; display: flex; align-items: center; padding-left: 11px; gap: 8px; color: #656871; letter-spacing: -.1px; }
.pager { margin-left: auto; display: flex; align-items: center; gap: 18px; color: #b4b4bb; margin-top: 2px; }
.pager b { color: #0f141a; font-size: 12px; }
.prefs { margin: 2px 0 0 12px; border-left: 1px solid #c6c6cd; height: 24px; display: flex; align-items: center; padding: 0 4px 0 12px; color: #424650; }
.row { display: grid; grid-template-columns: 267px 267px 267px 1fr; height: 28px; align-items: center; letter-spacing: -.15px; }
.row > div { padding-left: 14.500px; display: flex; align-items: center; }
.row > div:first-child { padding-left: 2.500px; }
.row > .id { letter-spacing: .15px; }
.thead { border-bottom: 1px solid #c6c6cd; font-weight: 700; color: #424650; letter-spacing: -.4px; }
.thead > div { justify-content: space-between; padding-right: 12px; border-right: 1px solid #8c8c94; height: 16px; margin-top: 2px; }
.thead > div:last-child { padding-right: 13px; }
.thead svg { width: 10px; height: 9px; }
.line { border-bottom: 1px solid #e4e4ea; height: 29px; padding-bottom: 1px; }
.line + .row { height: 26px; }
.nat { color: #006ce0; border-bottom: 1px solid #006ce0; line-height: 15px; }
.row .ok { color: #00802f; padding-left: 14px; }
.ok svg { width: 14px; height: 14px; margin-right: 4.500px; }

/* console footer */
.aws-foot { height: 32px; background: #161d26; border-top: 1px solid #424650; display: flex; align-items: center; padding: 0 0 3px 14px; color: #e6e8ec; font-size: 10.800px; font-weight: 600; letter-spacing: -.2px; white-space: nowrap; }
.aws-foot svg { margin-top: 4px; }
.f1 { margin-left: 4.500px; width: 75px; letter-spacing: -.3px; } .f2 { width: 60px; padding-top: 1px; letter-spacing: -.4px; }
.copyr { margin-left: auto; width: 274px; font-weight: 400; color: #d0d2d8; letter-spacing: -.14px; }
.f3 { width: 57px; } .f4 { width: 53px; } .f5 { width: 107px; letter-spacing: -.5px; }
.aws-foot .f5 { letter-spacing: -.45px; }

/* desktop taskbar */
.taskbar { height: 40px; display: flex; position: relative; color: #fff; font-family: "Open Sans", sans-serif; overflow: hidden; }
.wall { position: absolute; left: 0; top: 0; z-index: 0; }
.taskbar > div, .taskbar > span { position: relative; flex: none; }
.start { width: 48px; display: grid; place-items: center; }
.tb-search { width: 288px; height: 40px; background: #f2f2f2; border: 1px solid #b9b9b9; display: flex; align-items: center; padding-left: 11px; color: #333; font-size: 14.500px; letter-spacing: -.3px; }
.tb-search span { margin-left: 11px; width: 173px; white-space: nowrap; }
.app { width: 44px; display: grid; place-items: center; }
.w50 { width: 49px; } .w47 { width: 47px; } .w45 { width: 45px; }
.app.run::after { content: ""; position: absolute; left: 4px; right: 4px; bottom: 0; height: 2px; background: #76b9ed; }
.app.active { background: rgba(190, 180, 190, .35); }
.app.run.active::after { left: 0; right: 0; }
.weather { width: 57px; display: grid; align-items: center; padding-left: 26px; }
.badge { position: absolute; left: 41px; top: 8px; font: 700 9px/14px "DejaVu Sans", sans-serif; }
.temp { font-size: 14px; line-height: 40px; width: 56px; padding-left: 1px; letter-spacing: -.5px; }
.tray { display: flex; align-items: center; gap: 8.500px; width: 145px; }
.lang { font-size: 12px; line-height: 40px; width: 27px; letter-spacing: -.5px; }
.clock { width: 72px; font-size: 12px; line-height: 20px; letter-spacing: -.3px; display: flex; flex-direction: column; align-items: center; padding-top: 1px; }
.date { font: 10.500px/18px "DejaVu Sans", sans-serif; }
.notif { width: 40px; display: grid; align-items: center; padding-left: 7px; }
.notif span { position: absolute; left: 14px; top: 18px; width: 16px; height: 16px; border-radius: 50%; background: #4c4c4c; border: 1px solid #aaa; font: 11px/14px "DejaVu Sans", sans-serif; text-align: center; }

.watermark { position: absolute; left: 1073px; top: 650px; color: rgba(120, 120, 120, .5); font-family: "Open Sans", sans-serif; white-space: nowrap; }
.watermark p:first-child { font-size: 18.800px; line-height: 25px; letter-spacing: .2px; }
.watermark p:last-child { font-size: 14.350px; line-height: 20px; }
```
